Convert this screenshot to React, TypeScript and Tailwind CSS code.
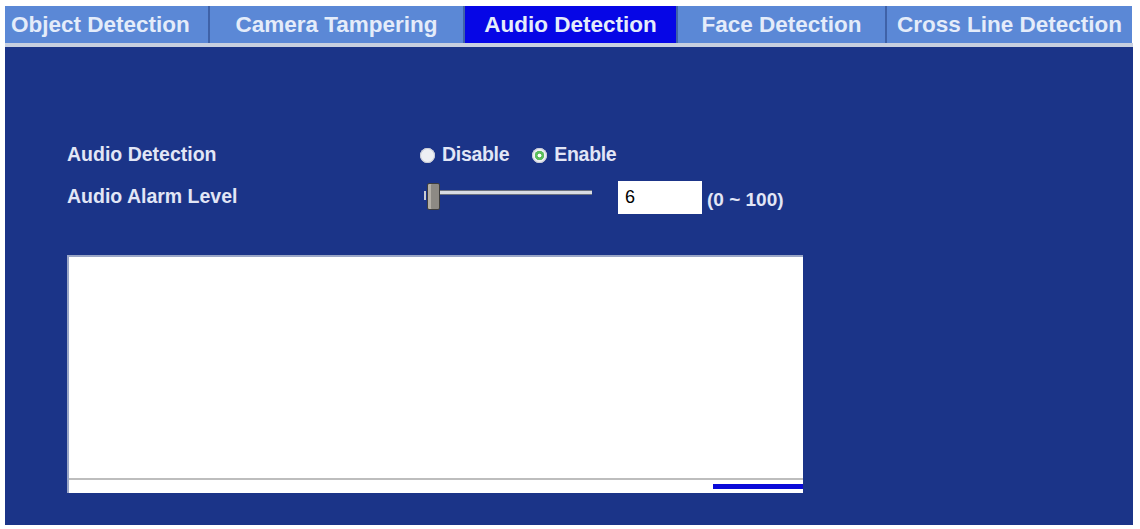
import React, { useState } from "react";

const tabs = [
  { label: "Object Detection", w: "w-[205px]" },
  { label: "Camera Tampering", w: "w-[255px]" },
  { label: "Audio Detection", w: "w-[213px]" },
  { label: "Face Detection", w: "w-[209px]" },
  { label: "Cross Line Detection", w: "w-[245px]" },
];

function Radio({ checked }: { checked: boolean }) {
  return (
    <span className="relative inline-flex h-[15px] w-[15px] items-center justify-center rounded-full bg-[#eef0f4] shadow-[inset_0_0_0_1px_#c9ccd6]">
      {checked && (
        <span className="h-[9px] w-[9px] rounded-full bg-[#3aa63a] shadow-[inset_0_0_0_2px_#5cc05c]">
          <span className="block h-full w-full scale-[0.45] rounded-full bg-white" />
        </span>
      )}
    </span>
  );
}

export default function App() {
  const [active] = useState(2);
  const [enabled] = useState(true);

  return (
    <div className="h-[529px] w-[1140px] bg-white pl-[5px] pt-[6px] font-['Liberation_Sans',Arial,sans-serif]">
      {/* tab strip */}
      <div className="flex h-[37px] w-[1127px] bg-[#5b88d6]">
        {tabs.map((t, i) => (
          <div
            key={t.label}
            className={`flex h-full items-center justify-center border-r-2 border-[#3f62a8] text-[22.5px] font-bold text-[#e4ecfa] first:justify-start first:pl-[6px] last:border-r-0 ${t.w} ${
              i === active ? "bg-[#0606e6]" : ""
            }`}
          >
            {t.label}
          </div>
        ))}
      </div>
      <div className="h-[4px] w-[1128px] bg-[#c8d0e0]" />

      {/* settings panel */}
      <div className="h-[478px] w-[1128px] bg-[#1b3488] pl-[62px] pt-[95px] text-[19.5px] font-bold text-[#e2e6f6]">
        <div className="flex h-[26px] items-center">
          <div className="w-[353px]">Audio Detection</div>
          <div className="flex items-center gap-[7px]">
            <Radio checked={!enabled} />
            <span className="tracking-[-0.3px]">Disable</span>
            <span className="ml-[9px]" />
            <Radio checked={enabled} />
            <span className="tracking-[-0.3px]">Enable</span>
          </div>
        </div>
        <div className="mt-[11px] flex h-[36px] items-center">
          <div className="w-[357px]">Audio Alarm Level</div>
          <div className="relative h-[36px] w-[168px]">
            <div className="absolute left-[14px] right-0 top-[11px] h-[5px] border-y border-[#6c7280] bg-[#d8dce4]" />
            <div className="absolute left-[3px] top-[4px] h-[27px] w-[13px] rounded-[2px] border border-[#3d3d3d] bg-[#8d8a84] shadow-[inset_3px_0_0_#b4b0a8]" />
            <div className="absolute left-0 top-[12px] h-[9px] w-[2px] bg-[#c9ccd4]" />
          </div>
          <div className="ml-[26px] flex h-[33px] w-[84px] items-center bg-white pl-[7px] text-[18px] font-normal text-black">
            6
          </div>
          <span className="ml-[5px] mt-[6px] text-[19px]">(0 ~ 100)</span>
        </div>
        <div className="mt-[40px] flex h-[238px] w-[736px] flex-col border-l-2 border-t-2 border-[#9aa6c6] bg-white">
          <div className="flex-1" />
          <div className="h-[2px] bg-[#bdbdbd]" />
          <div className="flex h-[13px] items-center justify-end">
            <div className="h-[5px] w-[90px] bg-[#0a0ad8]" />
          </div>
        </div>
      </div>
    </div>
  );
}
